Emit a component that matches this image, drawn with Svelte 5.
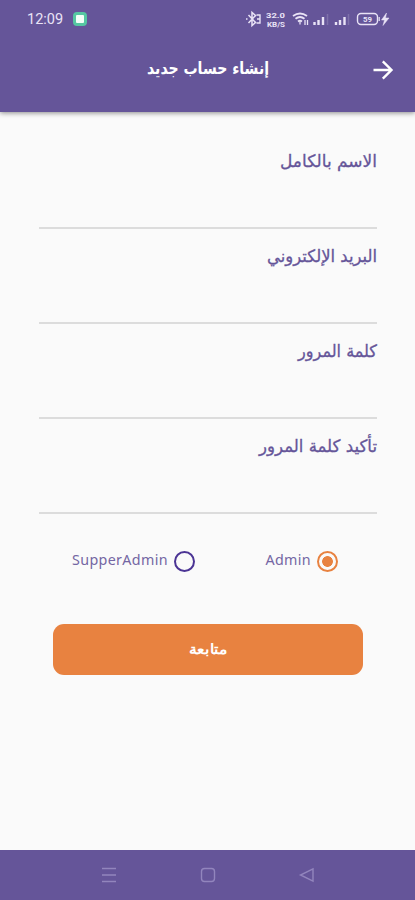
<script lang="ts">
    interface Field {
        id: string;
        label: string;
        type: "text" | "email" | "password";
        width: number;
    }

    const fields: Field[] = [
        { id: "name", label: "الاسم بالكامل", type: "text", width: 97 },
        { id: "email", label: "البريد الإلكتروني", type: "email", width: 110 },
        { id: "password", label: "كلمة المرور", type: "password", width: 79 },
        { id: "confirm", label: "تأكيد كلمة المرور", type: "password", width: 118 },
    ];

    const roles = ["Admin", "SupperAdmin"];

    let role = $state("Admin");
</script>

<div class="screen">
    <header>
        <div class="status">
            <span class="time">12:09</span>
            <span class="app-dot"></span>
            <svg class="icons" width="146" height="24" viewBox="245 7 146 24" fill="none" stroke="currentColor">
                <path d="M248.500 15l7 7.500-3.500 3V12.500l3.500 3-7 7.500M246 19h1.500" stroke-width="1.500" />
                <path d="M256.500 15h3.500v8h-3.500M257 19h3" stroke-width="1.400" />
                <text x="266" y="18" textLength="19" lengthAdjust="spacingAndGlyphs">32.0</text>
                <text x="267" y="26.500" textLength="18" lengthAdjust="spacingAndGlyphs">KB/S</text>
                <path d="M293 16q7-5 14 0M295.500 18.800q4.500-3.500 9 0M298 21.500q2-1.600 4 0" stroke-width="1.800" />
                <path d="M300 22v2.500M305 20v5M307.500 20v5" stroke-width="1.300" />
                <path d="M314.500 22v3M318.500 20v5M323 17v8" stroke-width="2.400" />
                <path d="M327.500 14v11M348.500 14v11" stroke-width="1.500" opacity="0.2" />
                <path d="M336 22v3M340 20v5M344.500 17v8" stroke-width="2.400" />
                <rect x="357.500" y="13.500" width="20" height="11" rx="3.500" stroke-width="1.400" />
                <path d="M379.200 17v4" stroke-width="1.200" />
                <text x="363" y="21.700" textLength="9" lengthAdjust="spacingAndGlyphs">59</text>
                <path d="M386.500 13l-5 7h3l-1.500 5.500 6-7.500h-3.500z" fill="currentColor" stroke="currentColor" stroke-width="0.500" />
            </svg>
        </div>
        <div class="bar">
            <h1>
                <svg width="124" height="34" viewBox="0 0 124 34">
                    <text class="bold" x="123" y="21.500" textLength="122" lengthAdjust="spacingAndGlyphs">إنشاء حساب جديد</text>
                </svg>
            </h1>
            <button class="back" aria-label="رجوع">
                <svg width="20" height="20" viewBox="0 0 20 20" fill="none" stroke="currentColor" stroke-width="2.400">
                    <path d="M0.500 10h17.500M9.800 1.300L18.500 10l-8.700 8.700" />
                </svg>
            </button>
        </div>
    </header>

    <main>
        {#each fields as field (field.id)}
            <div class="field">
                <label for={field.id}>
                    <svg width={field.width} height="30" viewBox="0 0 {field.width} 30">
                        <text x={field.width} y="21" textLength={field.width} lengthAdjust="spacingAndGlyphs">{field.label}</text>
                    </svg>
                </label>
                <input id={field.id} type={field.type} />
            </div>
        {/each}

        <div class="roles">
            {#each roles as name}
                <label class="role">
                    <input type="radio" name="role" value={name} bind:group={role} />
                    <span>{name}</span>
                </label>
            {/each}
        </div>

        <button class="submit">
            <svg width="40" height="30" viewBox="0 0 40 30">
                <text class="bold" x="39.500" y="18.500" textLength="39" lengthAdjust="spacingAndGlyphs">متابعة</text>
            </svg>
        </button>
    </main>

    <nav>
        <svg width="16" height="16" viewBox="0 0 16 16">
            <path d="M1 1.500h14M1 8h14M1 14.500h14" />
        </svg>
        <svg width="16" height="16" viewBox="0 0 16 16">
            <rect x="1.500" y="1.500" width="13" height="13" rx="3" />
        </svg>
        <svg width="16" height="16" viewBox="0 0 16 16">
            <path d="M14 1.800v12.400L1.500 8z" />
        </svg>
    </nav>
</div>

<style>
    :global(body) {
        margin: 0;
        background: #fafafa;
    }

    .screen {
        display: flex;
        flex-direction: column;
        height: 900px;
        background: #fafafa;
        color: #655599;
        font-family: "DejaVu Sans", "Noto Sans", sans-serif;
    }

    svg {
        display: block;
        flex: none;
        overflow: visible;
    }

    header {
        height: 112px;
        color: #fff;
        background: #655599;
        box-shadow: 0 1px 5px rgba(0, 0, 0, 0.45);
    }

    .status {
        display: flex;
        align-items: center;
        height: 38px;
        padding: 0 24px 0 27px;
        color: #e9e3f6;
    }

    .time {
        width: 46px;
        font-family: Roboto, sans-serif;
        font-size: 14.5px;
    }

    .app-dot {
        box-sizing: border-box;
        width: 14px;
        height: 14px;
        border: 3px solid #55c7a2;
        border-radius: 4px;
        background: #f3fff8;
    }

    .icons {
        margin-left: auto;
    }

    .icons text {
        font-family: Roboto, sans-serif;
        font-size: 7.5px;
        font-weight: 700;
        fill: currentColor;
        stroke: none;
    }

    .bar {
        display: grid;
        grid-template-columns: 1fr auto 1fr;
        align-items: center;
        height: 62px;
    }

    h1 {
        grid-column: 2;
        margin: 0;
    }

    h1 text {
        font-size: 17px;
    }

    text {
        fill: currentColor;
    }

    h1 text,
    .field text,
    .submit text {
        direction: rtl;
    }

    .bold {
        font-weight: 700;
    }

    button {
        padding: 0;
        border: 0;
        color: #fff;
        background: none;
    }

    .back {
        justify-self: end;
        margin: 1px 22px 0 0;
    }

    main {
        flex: 1;
        padding: 34px 38px 0 39px;
    }

    .field {
        display: flex;
        flex-direction: column;
        align-items: flex-end;
        height: 95px;
    }

    .field text {
        font-size: 17px;
        stroke: currentColor;
        stroke-width: 0.3px;
    }

    .field input {
        box-sizing: border-box;
        width: 100%;
        height: 53px;
        border: 0;
        border-bottom: 2px solid #dcdcdc;
        background: none;
        outline: none;
    }

    .roles {
        display: flex;
        flex-direction: row-reverse;
        justify-content: space-between;
        height: 22px;
        margin-top: 24px;
        padding: 0 39px 0 33px;
    }

    .role {
        display: flex;
        flex-direction: row-reverse;
        align-items: center;
        gap: 6px;
        color: #7466a3;
        font-family: "Noto Sans", sans-serif;
        font-size: 14.3px;
        letter-spacing: 0.35px;
    }

    .role span {
        margin-top: -4px;
    }

    .role input {
        appearance: none;
        box-sizing: border-box;
        width: 21px;
        height: 21px;
        margin: 0;
        border: 2px solid #4b3494;
        border-radius: 50%;
    }

    .role input:checked {
        border-color: #e88240;
        background: radial-gradient(circle, #e88240 5px, transparent 5.7px);
    }

    .submit {
        display: flex;
        align-items: center;
        justify-content: center;
        width: 310px;
        height: 51px;
        margin: 52px 0 0 14px;
        border-radius: 11px;
        background: #e88240;
    }

    .submit text {
        font-size: 14px;
    }

    nav {
        display: flex;
        align-items: center;
        justify-content: center;
        gap: 83px;
        height: 50px;
        background: #655599;
    }

    nav svg {
        fill: none;
        stroke: #9285bd;
        stroke-width: 1.4;
    }
</style>
